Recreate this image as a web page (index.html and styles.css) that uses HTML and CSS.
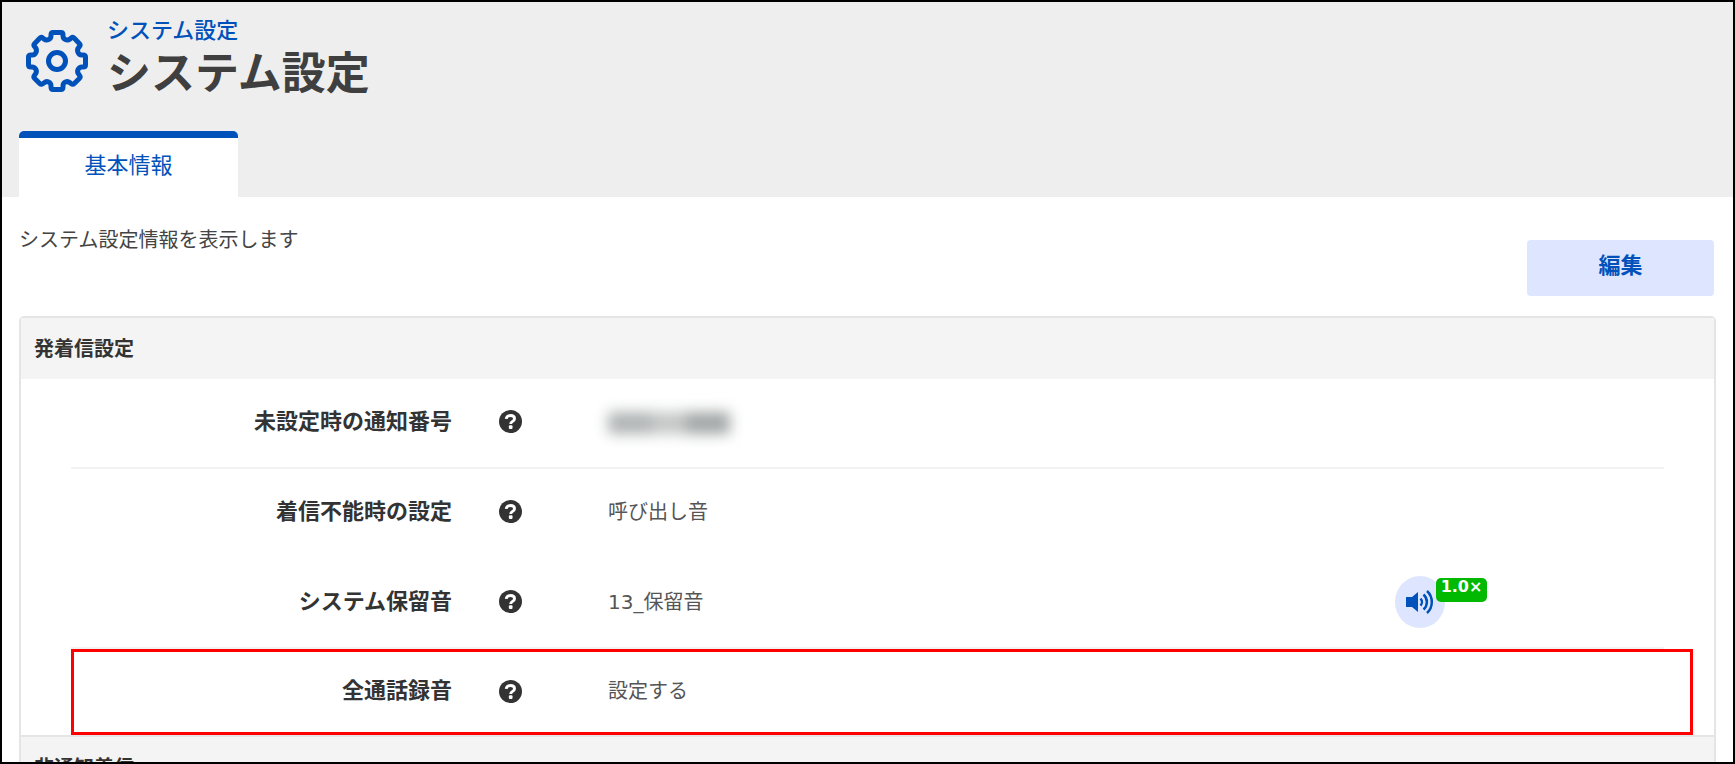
FILE: index.html
```html
<!DOCTYPE html>
<html lang="ja">
<head>
<meta charset="utf-8">
<title>システム設定</title>
<link rel="stylesheet" href="styles.css">
</head>
<body>
<svg class="defs" aria-hidden="true">
  <symbol id="help" viewBox="0 0 24 24">
    <circle cx="12" cy="12" r="12" fill="#333"/>
    <path d="M7.500 9.300C7.800 6.700 9.500 5.800 12 5.800c2.600 0 4.200 1.200 4.200 3.200 0 3-4 2.800-4 5.600" fill="none" stroke="#fff" stroke-width="3"/>
    <rect x="10.300" y="16" width="3.800" height="3.800" rx="1" fill="#fff"/>
  </symbol>
</svg>
<div class="app">
  <header class="page-header">
    <div class="title-row">
      <svg class="gear" viewBox="0 0 64 64" fill="none" stroke="#0052ba" stroke-width="5" stroke-linejoin="round" aria-hidden="true">
        <path d="M28 3.500h8c1.500 0 2 1 2 2.500v1c0 3 4 5.500 7 3l1-.8c1.200-1 2.400-.9 3.300 0l5 5.200c1 1 1 2 .2 3l-.8 1c-2.500 3-.5 7.600 3 7.600h1.300c1.500 0 2.500.7 2.500 2v8c0 1.500-1 2-2.500 2h-1c-3.500 0-5.800 4-3.300 7.200l.8 1c.8 1 .8 2.200-.2 3.200l-5 5c-1 1-2.200 1-3.300.2l-1-.8c-3-2.500-7-.5-7 3V58c0 1.500-.5 2.500-2 2.500h-8c-1.500 0-2-1-2-2.500v-1.200c0-3.500-4-5.500-7-3l-1 .8c-1.100.8-2.300.8-3.300-.2l-5-5c-1-1-1-2.200-.2-3.200l.8-1C12.800 42 10.500 38 7 38H6c-1.500 0-2.500-.5-2.500-2v-8c0-1.300 1-2 2.500-2h1.300c3.500 0 5.500-4.600 3-7.600l-.8-1c-.8-1-.8-2 .2-3l5-5.200c.9-.9 2.100-1 3.300 0l1 .8c3 2.500 7 0 7-3V6c0-1.500.5-2.500 2-2.500z"/>
        <circle cx="32" cy="32" r="8.500"/>
      </svg>
      <div class="titles">
        <p class="crumb">システム設定</p>
        <h1 class="title">システム設定</h1>
      </div>
    </div>
    <nav class="tabs"><a class="tab" href="#basic">基本情報</a></nav>
  </header>
  <main class="content" id="basic">
    <div class="intro">
      <p class="lead">システム設定情報を表示します</p>
      <button class="edit" type="button">編集</button>
    </div>
    <section class="card">
      <h2 class="card-head">発着信設定</h2>
      <dl class="rows">
        <div class="row ruled">
          <dt class="label">未設定時の通知番号</dt>
          <dd class="help"><svg class="help-icon" role="img" aria-label="ヘルプ"><use href="#help"/></svg></dd>
          <dd class="value"><span class="masked"><span class="blob"></span><span class="blob faint"></span><span class="blob dark"></span></span></dd>
        </div>
        <div class="row">
          <dt class="label">着信不能時の設定</dt>
          <dd class="help"><svg class="help-icon" role="img" aria-label="ヘルプ"><use href="#help"/></svg></dd>
          <dd class="value">呼び出し音</dd>
        </div>
        <div class="row ruled">
          <dt class="label">システム保留音</dt>
          <dd class="help"><svg class="help-icon" role="img" aria-label="ヘルプ"><use href="#help"/></svg></dd>
          <dd class="value">13_保留音</dd>
          <dd class="player">
            <button class="play" type="button" aria-label="再生">
              <svg class="speaker" viewBox="0 0 30 24" aria-hidden="true">
                <path d="M1 7h6l6-5v20l-6-5H1z" fill="#0052ba"/>
                <path d="M15.500 8.500a5 5 0 0 1 0 7M18.500 4.500a10 10 0 0 1 0 15M22 1a15 15 0 0 1 0 22" fill="none" stroke="#0052ba" stroke-width="2.500"/>
              </svg>
            </button>
            <span class="speed">1.0×</span>
          </dd>
        </div>
        <div class="row marked">
          <dt class="label">全通話録音</dt>
          <dd class="help"><svg class="help-icon" role="img" aria-label="ヘルプ"><use href="#help"/></svg></dd>
          <dd class="value">設定する</dd>
        </div>
      </dl>
      <h2 class="card-head next">非通知着信</h2>
    </section>
  </main>
</div>
</body>
</html>
```
FILE: styles.css
```css
* { box-sizing: border-box; }
body {
  margin: 0;
  color: #444;
  font-family: "Noto Sans CJK JP", sans-serif;
  font-size: 20px;
  line-height: 30px;
}
h1, h2, p, dl, dd { margin: 0; }
.defs { display: none; }
.app {
  height: 100vh;
  overflow: hidden;
  border: 2px solid #000;
  background: #fff;
}
.page-header { padding: 13px 17px 0; background: #eee; }
.title-row { display: flex; gap: 18px; padding: 0 6px; }
.gear { width: 64px; height: 64px; margin-top: 14px; }
.crumb { color: #0052ba; font-size: 22px; line-height: 26px; font-weight: 500; }
.title { color: #3f3f3f; font-size: 44px; line-height: 58px; font-weight: 700; }
.tabs { display: flex; margin-top: 32px; }
.tab {
  width: 219px;
  height: 66px;
  border-top: 7px solid #0052ba;
  border-radius: 5px 5px 0 0;
  background: #fff;
  color: #0052ba;
  font-size: 22px;
  line-height: 50px;
  text-align: center;
  text-decoration: none;
}
.content { padding: 27px 17px 0; }
.intro { display: flex; justify-content: space-between; }
.edit {
  width: 187px;
  height: 56px;
  margin: 16px 2px 0 0;
  padding: 0 0 10px;
  border: 0;
  border-radius: 4px;
  background: #dee6ff;
  color: #0052ba;
  font: 700 22px "Noto Sans CJK JP", sans-serif;
}
.card { margin-top: 20px; border: 2px solid #e5e5e5; border-radius: 5px; }
.card-head {
  padding: 14px 13px 16px;
  background: #f4f4f4;
  color: #333;
  font-size: 20px;
  line-height: 31px;
  font-weight: 700;
}
.next { border-top: 2px solid #e5e5e5; }
.rows { padding: 0 50px; }
.row { display: flex; align-items: center; height: 90px; padding-bottom: 5px; position: relative; }
.ruled::after {
  content: "";
  position: absolute;
  inset: auto 0 0;
  border-bottom: 2px solid #f2f2f2;
}
.label { width: 381px; padding-bottom: 6px; color: #333; font-size: 22px; font-weight: 700; text-align: right; }
.help { width: 156px; padding-left: 47px; }
.help-icon { display: block; width: 23px; height: 23px; }
.value { flex: 1; color: #555; font-family: "DejaVu Sans", "Noto Sans CJK JP", sans-serif; }
.masked {
  display: flex;
  align-items: center;
  width: 122px;
  height: 30px;
  padding-top: 2px;
  filter: blur(7px);
}
.blob { width: 44px; height: 22px; background: #b0b4b4; }
.faint { width: 34px; background: #c4c6c6; }
.dark { background: #a2a6a6; }
.player { position: relative; width: 269px; }
.play {
  display: flex;
  align-items: center;
  justify-content: center;
  width: 50px;
  height: 52px;
  padding: 0;
  border: 0;
  border-radius: 50%;
  background: #dee6ff;
}
.speaker { width: 30px; height: 24px; }
.speed {
  position: absolute;
  top: 2px;
  left: 41px;
  width: 51px;
  height: 24px;
  border-radius: 5px;
  background: #00b900;
  color: #fff;
  font: 700 16px/18px "DejaVu Sans", sans-serif;
  text-align: center;
}
.marked { height: 86px; margin-right: -29px; border: 3px solid #f00; padding: 0 0 2px; }
.marked .label { width: 378px; }
```
